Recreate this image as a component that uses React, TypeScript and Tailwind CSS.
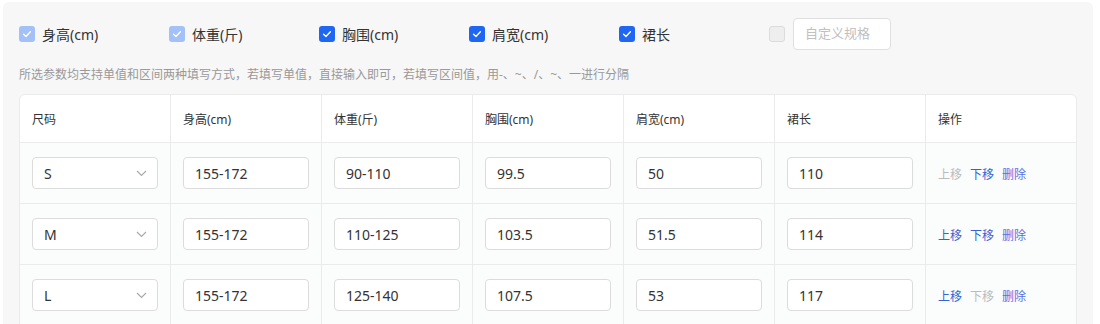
import React from "react";

const font = { fontFamily: '"Noto Sans", "Noto Sans CJK SC", sans-serif' };

function Check({ state }: { state: "on" | "dim" | "off" }) {
  if (state === "off")
    return <span className="w-4 h-4 rounded-[3px] border border-[#dcdcdc] bg-[#eeeeee] shrink-0" />;
  return (
    <span
      className={
        "w-4 h-4 rounded-[3px] flex items-center justify-center shrink-0 " +
        (state === "on" ? "bg-[#1f66f2]" : "bg-[#a3c0f7]")
      }
    >
      <svg width="10" height="10" viewBox="0 0 10 10" fill="none">
        <path d="M1.6 5.2 L4 7.4 L8.4 2.8" stroke="white" strokeWidth="1.4" strokeLinecap="round" strokeLinejoin="round" />
      </svg>
    </span>
  );
}

const opts: { label: string; state: "on" | "dim" }[] = [
  { label: "身高(cm)", state: "dim" },
  { label: "体重(斤)", state: "dim" },
  { label: "胸围(cm)", state: "on" },
  { label: "肩宽(cm)", state: "on" },
  { label: "裙长", state: "on" },
];

const headers = ["尺码", "身高(cm)", "体重(斤)", "胸围(cm)", "肩宽(cm)", "裙长", "操作"];

const rows = [
  { size: "S", vals: ["155-172", "90-110", "99.5", "50", "110"], up: false, down: true },
  { size: "M", vals: ["155-172", "110-125", "103.5", "51.5", "114"], up: true, down: true },
  { size: "L", vals: ["155-172", "125-140", "107.5", "53", "117"], up: true, down: false },
];

function Field({ value, select }: { value: string; select?: boolean }) {
  return (
    <div className="w-[126px] h-[32px] border border-[#dcdcdc] rounded-[4px] bg-white flex items-center justify-between pl-[11px] pr-[10px] text-[14px] text-[#333]">
      <span>{value}</span>
      {select && (
        <svg width="11" height="7" viewBox="0 0 11 7" fill="none">
          <path d="M1 1 L5.5 5.5 L10 1" stroke="#a8a8a8" strokeWidth="1.1" />
        </svg>
      )}
    </div>
  );
}

export default function App() {
  return (
    <div className="w-[1100px] h-[324px] bg-white overflow-hidden" style={font}>
      <div className="ml-[3px] mt-[2px] w-[1090px] h-[340px] bg-[#f7f7f7] rounded-[6px] pt-[16px] px-[16px]">
        <div className="flex items-center h-[32px]">
          {opts.map((o) => (
            <div key={o.label} className="w-[150px] flex items-center gap-[7px] text-[14px] text-[#333]">
              <Check state={o.state} />
              <span>{o.label}</span>
            </div>
          ))}
          <div className="flex items-center gap-[8px]">
            <Check state="off" />
            <div className="w-[98px] h-[32px] border border-[#e0e0e0] rounded-[4px] bg-white flex items-center pl-[11px] text-[13px] text-[#c0c0c0]">
              自定义规格
            </div>
          </div>
        </div>
        <div className="mt-[17px] text-[12px] leading-[16px] text-[#999]">
          所选参数均支持单值和区间两种填写方式，若填写单值，直接输入即可，若填写区间值，用-、~、/、~、一进行分隔
        </div>
        <div className="mt-[11px] w-[1058px] border border-[#ebebeb] rounded-t-[6px] bg-white overflow-hidden">
          <div className="flex h-[48px] border-b border-[#ebebeb]">
            {headers.map((h, i) => (
              <div
                key={h}
                className={
                  "flex items-center pl-[12px] pt-[2px] text-[12px] text-[#333] " +
                  (i < 6 ? "w-[151px] border-r border-[#ebebeb]" : "flex-1")
                }
              >
                {h}
              </div>
            ))}
          </div>
          {rows.map((r) => (
            <div key={r.size} className="flex h-[61px] border-b border-[#ebebeb] bg-[#fbfcfc]">
              <div className="w-[151px] border-r border-[#ebebeb] flex items-center pl-[12px]">
                <Field value={r.size} select />
              </div>
              {r.vals.map((v, i) => (
                <div key={i} className="w-[151px] border-r border-[#ebebeb] flex items-center pl-[12px]">
                  <Field value={v} />
                </div>
              ))}
              <div className="flex-1 flex items-center pl-[12px] pt-[3px] gap-[8px] text-[12px]">
                <span className={r.up ? "text-[#3563d6]" : "text-[#bbbbbb]"}>上移</span>
                <span className={r.down ? "text-[#3563d6]" : "text-[#bbbbbb]"}>下移</span>
                <span className="text-[#5a6fe3]">删除</span>
              </div>
            </div>
          ))}
        </div>
      </div>
    </div>
  );
}
